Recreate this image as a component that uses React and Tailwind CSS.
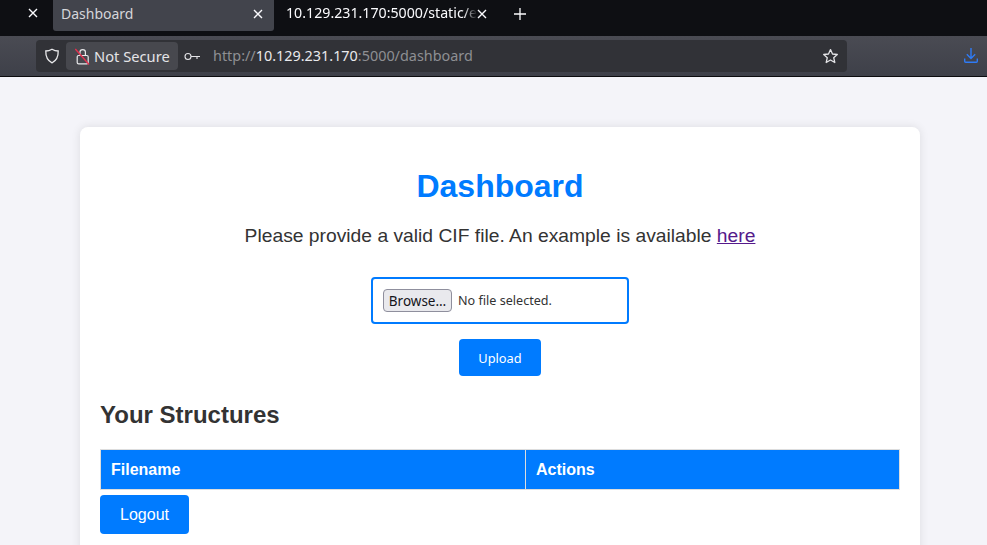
const chromeFont = { fontFamily: '"Noto Sans", sans-serif' };

function CloseIcon({ className = "" }) {
  return (
    <svg width="10" height="10" viewBox="0 0 10 10" className={className} fill="none" stroke="currentColor" strokeWidth="1.4">
      <path d="M1 1 L9 9 M9 1 L1 9" />
    </svg>
  );
}

function TabBar() {
  return (
    <div className="flex h-9 bg-[#0e0f13] text-[#fbfbfe] text-sm">
      <div className="w-[53px] pl-[28px] pt-[8px]">
        <CloseIcon />
      </div>
      <div className="flex h-[31px] w-[221px] items-center justify-between rounded-b-[3px] bg-[#42444c] pb-[3px] pl-2 pr-[11px]">
        <span className="text-[#d5d6da]">Dashboard</span>
        <CloseIcon />
      </div>
      <div className="flex h-[27px] w-[216px] items-center pl-3">
        <span className="w-[191px] overflow-hidden whitespace-nowrap text-[14.2px] [mask-image:linear-gradient(to_right,black_93%,transparent)]">10.129.231.170:5000/static/example.cif</span>
        <CloseIcon />
      </div>
      <div className="pl-[24px] pt-[8px]">
        <svg width="12" height="12" viewBox="0 0 12 12" stroke="currentColor" strokeWidth="1.3">
          <path d="M6 0 V12 M0 6 H12" />
        </svg>
      </div>
    </div>
  );
}

function NavBar() {
  return (
    <div className="flex h-[41px] border-b border-b-[#0c0c0f] bg-gradient-to-b from-[#4a4b53] to-[#3e4049] pl-9 pr-[9px] pt-1">
      <div className="flex h-8 w-[811px] items-center rounded-[4px] bg-[#313237] pl-2 pr-2">
        <svg width="16" height="16" viewBox="0 0 16 16" fill="none" stroke="#e8e8ea" strokeWidth="1.3">
          <path d="M8 1.2 C10 2.4 12 3 14.2 3 C14.4 8.5 12.5 12.6 8 14.8 C3.5 12.6 1.6 8.5 1.8 3 C4 3 6 2.4 8 1.2 Z" />
        </svg>
        <div className="ml-[6px] flex h-[28px] w-[112px] items-center rounded-[4px] bg-[#47484e] pl-[9px]">
          <svg width="15" height="17" viewBox="0 0 15 17" fill="none" className="shrink-0">
            <path d="M5 7.5 V4 C5 0.8 10.4 0.8 10.4 4 V7.5" stroke="#e8e8ea" strokeWidth="1.2" />
            <rect x="2.2" y="7.5" width="11" height="8.4" rx="1.4" stroke="#e8e8ea" strokeWidth="1.2" />
            <path d="M0.3 1 L14 16.5" stroke="#e5304f" strokeWidth="1.4" />
          </svg>
          <span className="ml-[4px] text-[14.7px] text-[#e4e4e7]">Not Secure</span>
        </div>
        <svg width="17" height="9" viewBox="0 0 17 9" fill="none" stroke="#e4e4e7" strokeWidth="1.1" className="ml-[6px] shrink-0">
          <circle cx="4" cy="4.5" r="3" />
          <path d="M7 4.5 H16 M13 4.5 V7" />
        </svg>
        <div className="ml-[12px] flex-1 whitespace-nowrap text-[14.4px] text-[#8e8f93]">
          http://<span className="text-[#e9e9ec]">10.129.231.170</span>:5000/dashboard
        </div>
        <svg width="17" height="17" viewBox="0 0 17 17" fill="none" stroke="#e4e4e7" strokeWidth="1.3" strokeLinejoin="round">
          <path d="M8.5 1.6 L10.5 6 L15.3 6.5 L11.7 9.7 L12.8 14.5 L8.5 12 L4.2 14.5 L5.3 9.7 L1.7 6.5 L6.5 6 Z" />
        </svg>
      </div>
      <div className="ml-auto pt-[8px]">
        <svg width="14" height="15" viewBox="0 0 14 15" fill="none" stroke="#2f7bf5" strokeWidth="1.4">
          <path d="M7 0 V10.5 M2.8 6.3 L7 10.5 L11.2 6.3 M0.7 10.5 V13.2 C0.7 13.8 1 14.2 1.6 14.2 H12.4 C13 14.2 13.3 13.8 13.3 13.2 V10.5" />
        </svg>
      </div>
    </div>
  );
}

export default function App() {
  return (
    <div className="h-[545px] w-[987px] overflow-hidden bg-[#f4f4f9]" style={{ fontFamily: '"Liberation Sans", Arial, sans-serif' }}>
      <div style={chromeFont}>
        <TabBar />
        <NavBar />
      </div>

      <main className="ml-20 mt-[50px] h-[460px] w-[840px] rounded-lg bg-white p-5 text-[#333333] shadow-[0_0_10px_rgba(0,0,0,0.1)]">
        <h1 className="mt-[21px] text-center text-[32px] font-bold leading-[37px] text-[#007bff]">Dashboard</h1>
        <p className="mt-[20px] text-center text-[19.28px] leading-[22px]">
          Please provide a valid CIF file. An example is available{" "}
          <a href="#" className="text-[#551a8b] underline">here</a>
        </p>

        <form className="mt-[30px] flex flex-col items-center" style={chromeFont}>
          <div className="flex h-[47px] w-[258px] items-center rounded-[4px] border-2 border-[#007bff] pl-[10px]">
            <button type="button" className="h-[23px] w-[69px] rounded-[4px] border border-[#8f8f9d] bg-[#e9e9ed] pt-[2px] text-[13.5px] leading-none text-[#15141a]">
              Browse…
            </button>
            <span className="ml-[6px] mt-[2px] text-[12.6px] text-[#333333]">No file selected.</span>
          </div>
          <button type="button" className="mt-[15px] h-[37px] w-[82px] rounded-[4px] bg-[#007bff] pt-[2px] text-[12.8px] text-white">
            Upload
          </button>
        </form>

        <h2 className="mt-[25px] text-[24px] font-bold leading-[28px]">Your Structures</h2>

        <table className="mt-[20px] w-full table-fixed border-collapse">
          <thead>
            <tr className="bg-[#007bff] text-left text-white">
              <th className="h-10 w-[425px] border border-[#dddddd] px-[10px] text-base font-bold">Filename</th>
              <th className="h-10 border border-[#dddddd] px-[10px] text-base font-bold">Actions</th>
            </tr>
          </thead>
        </table>

        <button type="button" className="mt-[5px] h-[39px] w-[89px] rounded-[4px] bg-[#007bff] text-base text-white">
          Logout
        </button>
      </main>
    </div>
  );
}
